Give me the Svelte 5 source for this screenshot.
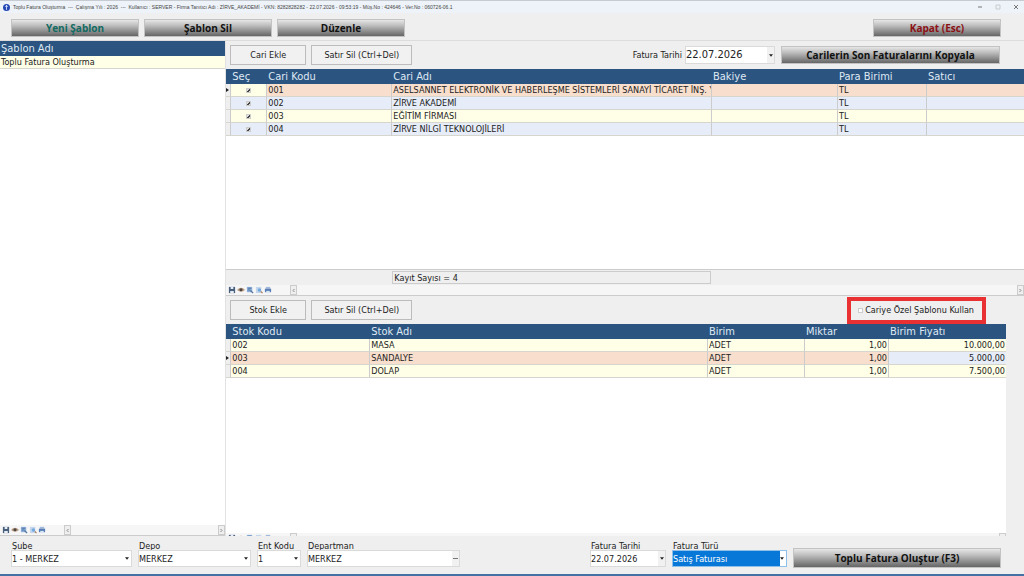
<script lang="ts">
  let customers = $state([
    { selected: true, code: "001", name: "ASELSANNET ELEKTRONİK VE HABERLEŞME SİSTEMLERİ SANAYİ TİCARET İNŞ. Y", currency: "TL" },
    { selected: true, code: "002", name: "ZİRVE AKADEMİ", currency: "TL" },
    { selected: true, code: "003", name: "EĞİTİM FİRMASI", currency: "TL" },
    { selected: true, code: "004", name: "ZİRVE NİLGİ TEKNOLOJİLERİ", currency: "TL" },
  ]);

  const stocks = [
    { code: "002", name: "MASA", unit: "ADET", amount: "1,00", price: "10.000,00" },
    { code: "003", name: "SANDALYE", unit: "ADET", amount: "1,00", price: "5.000,00" },
    { code: "004", name: "DOLAP", unit: "ADET", amount: "1,00", price: "7.500,00" },
  ];

  let currentCustomer = $state(0);
  let currentStock = $state(1);
  let invoiceDate = $state("22.07.2026");
  let useOwnTemplate = $state(false);
</script>

{#snippet caret()}
  <svg class="caret" viewBox="0 0 5 3" aria-hidden="true"><path d="M0 0h5L2.5 3z" /></svg>
{/snippet}

{#snippet pointer()}
  <svg class="pointer" viewBox="0 0 3 4" aria-hidden="true"><path d="M0 0v4l3-2z" /></svg>
{/snippet}

{#snippet navigator()}
  <div class="navigator">
    <button aria-label="Kaydet">
      <svg viewBox="0 0 9 9"><path d="M1 1h7v7H1z" fill="#48607c" /><path d="M3 1h3v2.500H3zM2.500 5.500h4V8h-4z" fill="#e6edf5" /></svg>
    </button>
    <button aria-label="Göster">
      <svg viewBox="0 0 9 9"><path d="M0 4.500q4.500-5 9 0q-4.500 4-9 0z" fill="#b79c86" /><circle cx="4.500" cy="4.300" r="1.700" fill="#4f4642" /></svg>
    </button>
    <button aria-label="Süz">
      <svg viewBox="0 0 9 9"><path d="M1 1h6v6H1z" fill="#8fb1db" /><path d="M2 2.500h4M2 4.500h3" stroke="#496f9f" /><path d="M5 5l3 3" stroke="#54779f" stroke-width="1.500" /></svg>
    </button>
    <button aria-label="Önizle">
      <svg viewBox="0 0 9 9"><path d="M1 1h6v7H1z" fill="#c4d6eb" /><circle cx="5" cy="4.500" r="2" fill="#76a9de" /><path d="M6.500 6l2 2" stroke="#a37855" stroke-width="1.300" /></svg>
    </button>
    <button aria-label="Yazdır">
      <svg viewBox="0 0 9 9"><path d="M2 1h5v2H2z" fill="#9fb9dc" /><path d="M1 3h7v4H1z" fill="#587eb4" /><path d="M2.500 5.500h4V8h-4z" fill="#dbe7f5" /></svg>
    </button>
    <div class="scrollbar">
      <button aria-label="Sola kaydır"><svg viewBox="0 0 5 5"><path d="M3.500 1L2 2.500 3.500 4" /></svg></button>
      <button aria-label="Sağa kaydır"><svg viewBox="0 0 5 5"><path d="M1.500 1L3 2.500 1.500 4" /></svg></button>
    </div>
  </div>
{/snippet}

<div class="window">
  <header class="titlebar">
    <svg class="logo" viewBox="0 0 8 8" aria-hidden="true">
      <circle cx="4" cy="4" r="4" fill="#2449b4" />
      <path d="M4 1.200v5.500M2.500 3.200L4 1.500l1.500 1.700" stroke="#dce6ff" fill="none" />
    </svg>
    <h1>Toplu Fatura Oluşturma &nbsp;---&nbsp; Çalışma Yılı : 2026 &nbsp;---&nbsp; Kullanıcı : SERVER - Firma Tanıtıcı Adı : ZİRVE_AKADEMİ - VKN: 8282828282 - 22.07.2026 - 09:53:19 - Müş.No : 424646 - Ver.No : 060726-06.1</h1>
    <div class="system">
      <button aria-label="Küçült"><svg viewBox="0 0 6 6"><path d="M1 3h4" /></svg></button>
      <button class="disabled" aria-label="Büyüt" disabled><svg viewBox="0 0 6 6"><path d="M1 1h4v4H1z" /></svg></button>
      <button aria-label="Pencereyi kapat"><svg viewBox="0 0 6 6"><path d="M1 1l4 4M5 1L1 5" /></svg></button>
    </div>
  </header>

  <nav class="toolbar">
    <button class="metal new">Yeni Şablon</button>
    <button class="metal">Şablon Sil</button>
    <button class="metal">Düzenle</button>
    <button class="metal close">Kapat (Esc)</button>
  </nav>

  <main>
    <aside>
      <table>
        <thead><tr><th>Şablon Adı</th></tr></thead>
        <tbody><tr><td>Toplu Fatura Oluşturma</td></tr></tbody>
      </table>
      <div class="space"></div>
      {@render navigator()}
    </aside>

    <div class="content">
      <section class="customers">
        <div class="actions">
          <button class="plain add">Cari Ekle</button>
          <button class="plain">Satır Sil (Ctrl+Del)</button>
          <label class="date-label" for="list-date">Fatura Tarihi</label>
          <div class="combo list-date">
            <input id="list-date" bind:value={invoiceDate} />
            <button aria-label="Takvim">{@render caret()}</button>
          </div>
          <button class="metal copy">Carilerin Son Faturalarını Kopyala</button>
        </div>
        <table>
          <colgroup>
            <col class="mark" /><col class="check" /><col class="code" /><col />
            <col class="balance" /><col class="currency" /><col class="seller" />
          </colgroup>
          <thead>
            <tr><th></th><th>Seç</th><th>Cari Kodu</th><th>Cari Adı</th><th>Bakiye</th><th>Para Birimi</th><th>Satıcı</th></tr>
          </thead>
          <tbody>
            {#each customers as customer, i}
              <tr class:current={i === currentCustomer} onclick={() => (currentCustomer = i)}>
                <td class="marker">{#if i === currentCustomer}{@render pointer()}{/if}</td>
                <td class="tick"><input type="checkbox" aria-label="Seç {customer.code}" bind:checked={customer.selected} /></td>
                <td>{customer.code}</td>
                <td>{customer.name}</td>
                <td></td>
                <td>{customer.currency}</td>
                <td></td>
              </tr>
            {/each}
          </tbody>
        </table>
        <div class="space"></div>
        <div class="summary"><output>Kayıt Sayısı = {customers.length}</output></div>
        {@render navigator()}
      </section>

      <section class="stocks">
        <div class="actions">
          <button class="plain add">Stok Ekle</button>
          <button class="plain">Satır Sil (Ctrl+Del)</button>
          <label class="own-template">
            <input type="checkbox" bind:checked={useOwnTemplate} />
            Cariye Özel Şablonu Kullan
          </label>
        </div>
        <div class="sheet">
          <table>
            <colgroup>
              <col class="mark" /><col class="stock-code" /><col />
              <col class="unit" /><col class="amount" /><col class="price" />
            </colgroup>
            <thead>
              <tr><th></th><th>Stok Kodu</th><th>Stok Adı</th><th>Birim</th><th>Miktar</th><th>Birim Fiyatı</th></tr>
            </thead>
            <tbody>
              {#each stocks as stock, i}
                <tr class:current={i === currentStock} onclick={() => (currentStock = i)}>
                  <td class="marker">{#if i === currentStock}{@render pointer()}{/if}</td>
                  <td>{stock.code}</td>
                  <td>{stock.name}</td>
                  <td>{stock.unit}</td>
                  <td class="number">{stock.amount}</td>
                  <td class="number focus">{stock.price}</td>
                </tr>
              {/each}
            </tbody>
          </table>
        </div>
        <div class="cut">{@render navigator()}</div>
      </section>
    </div>
  </main>

  <footer>
    <div class="field branch">
      <label for="branch">Şube</label>
      <div class="combo"><select id="branch"><option>1 - MERKEZ</option></select>{@render caret()}</div>
    </div>
    <div class="field depot">
      <label for="depot">Depo</label>
      <div class="combo"><select id="depot"><option>MERKEZ</option></select>{@render caret()}</div>
    </div>
    <div class="field ent">
      <label for="ent">Ent Kodu</label>
      <div class="combo"><select id="ent"><option>1</option></select>{@render caret()}</div>
    </div>
    <div class="field department">
      <label for="department">Departman</label>
      <div class="combo">
        <input id="department" value="MERKEZ" />
        <button aria-label="Departman seç"><svg class="dots" viewBox="0 0 5 1"><path d="M0 0h5v1H0z" /></svg></button>
      </div>
    </div>
    <div class="field date">
      <label for="date">Fatura Tarihi</label>
      <div class="combo">
        <input id="date" bind:value={invoiceDate} />
        <button aria-label="Takvim">{@render caret()}</button>
      </div>
    </div>
    <div class="field kind">
      <label for="kind">Fatura Türü</label>
      <div class="combo active"><select id="kind"><option>Satış Faturası</option></select>{@render caret()}</div>
    </div>
    <button class="metal create">Toplu Fatura Oluştur (F3)</button>
  </footer>
</div>

<style>
  :global(body) {
    margin: 0;
    background: #efefef;
  }

  .window {
    display: flex;
    flex-direction: column;
    box-sizing: border-box;
    min-height: 100vh;
    border-top: 1px solid #c5cbd0;
    border-bottom: 2px solid #4472a5;
    background: #efefef;
    color: #222;
    font-family: "DejaVu Sans Condensed", "DejaVu Sans", sans-serif;
    font-size: 9px;
    line-height: 12px;
  }

  .window * {
    box-sizing: border-box;
  }

  button,
  input,
  select {
    margin: 0;
    padding: 0;
    border: 0;
    border-radius: 0;
    color: inherit;
    font: inherit;
  }

  button {
    background: none;
  }

  .titlebar {
    display: flex;
    align-items: center;
    height: 12px;
    padding: 0 5px 0 3px;
    background: #eef3f9;
  }

  .logo {
    width: 7px;
    height: 7px;
  }

  h1 {
    flex: 1;
    margin: 0 0 0 3px;
    color: #444;
    font-family: "Liberation Sans", sans-serif;
    font-size: 5px;
    font-weight: 400;
    line-height: 8px;
    white-space: nowrap;
  }

  .system {
    display: flex;
    gap: 12px;
  }

  .system button {
    display: flex;
  }

  .system svg {
    width: 6px;
    height: 6px;
    fill: none;
    stroke: #777;
  }

  .system .disabled {
    opacity: 0.3;
  }

  .toolbar {
    display: flex;
    gap: 5px;
    height: 28px;
    padding: 6px 23px 0 11px;
    border-bottom: 1px solid #dcdcdc;
  }

  .metal {
    width: 128px;
    height: 18px;
    border: 1px solid #c3c3c3;
    background: linear-gradient(#e6e6e6, #bdbdbd 35%, #666);
    color: #111;
    font-family: "Open Sans", sans-serif;
    font-size: 10px;
    font-weight: 700;
    line-height: 16px;
  }

  .metal.new {
    color: #126a62;
  }

  .metal.close {
    margin-left: auto;
    color: #8b1014;
  }

  main {
    display: flex;
    flex: 1;
  }

  aside {
    display: flex;
    flex-direction: column;
    width: 22%;
    background: #fff;
  }

  .content {
    display: flex;
    flex: 1;
    flex-direction: column;
    min-width: 0;
    border-left: 1px solid #e2e2e2;
  }

  section {
    display: flex;
    flex-direction: column;
  }

  .customers {
    flex: 255;
  }

  .stocks {
    flex: 240;
  }

  .space {
    flex: 1;
    background: #fff;
  }

  .actions {
    display: flex;
    align-items: center;
    height: 28px;
    padding: 0 24px 0 4px;
  }

  .plain {
    width: 101px;
    height: 20px;
    border: 1px solid #bcbcbc;
    background: #f1f1f1;
  }

  .plain.add {
    width: 76px;
    margin-right: 5px;
  }

  .date-label {
    margin: 0 3px 0 auto;
  }

  .metal.copy {
    width: 219px;
    margin-left: 6px;
  }

  .combo {
    display: flex;
    position: relative;
    height: 17px;
    border: 1px solid #dadada;
    background: #fff;
  }

  .combo input,
  .combo select {
    flex: 1;
    min-width: 0;
    appearance: none;
    background: #fff;
    outline: 0;
  }

  .combo select {
    padding-right: 8px;
  }

  .combo button {
    display: flex;
    align-items: center;
    justify-content: center;
    width: 7px;
    background: #f1f1f1;
  }

  .caret {
    width: 4px;
    height: 3px;
    fill: #222;
  }

  select + .caret {
    position: absolute;
    top: 6px;
    right: 2px;
    pointer-events: none;
  }

  .dots {
    width: 5px;
    height: 1px;
    fill: #777;
  }

  .list-date {
    width: 90px;
    height: 18px;
    font-size: 11px;
  }

  table {
    width: 100%;
    border-collapse: separate;
    border-spacing: 0;
    table-layout: fixed;
  }

  th {
    height: 15px;
    padding: 0 1px;
    background: #2c5480;
    color: #dfe9f4;
    font-size: 11px;
    font-weight: 400;
    line-height: 15px;
    text-align: left;
    white-space: nowrap;
  }

  td {
    height: 13px;
    padding: 0 1px;
    overflow: hidden;
    border-right: 1px solid #ccc;
    border-bottom: 1px solid #d6d6ce;
    background: #ffffe8;
    white-space: nowrap;
  }

  .customers tr:nth-child(even) td {
    background: #e6edf8;
  }

  tr.current td {
    background: #f8dfcd;
  }

  tr.current .tick {
    background: #ffffe8;
  }

  tr.current .focus {
    background: #e6edf8;
  }

  .customers td.marker,
  .customers tr:nth-child(even) td.marker,
  .stocks td.marker {
    padding: 0;
    background: #efefef;
    line-height: 0;
  }

  .pointer {
    width: 3px;
    height: 4px;
    fill: #222;
  }

  td:last-child {
    border-right: 0;
  }

  .number {
    text-align: right;
  }

  .tick {
    line-height: 0;
    text-align: center;
  }

  .tick input {
    width: 5px;
    height: 5px;
    appearance: none;
    border: 1px solid #ddd;
    background: #eee;
    vertical-align: middle;
  }

  .tick input:checked {
    border-color: #ccc;
    background: linear-gradient(135deg, #ddd 45%, #444 45%, #444 75%, #ddd 75%);
  }

  .mark {
    width: 5px;
  }

  .check {
    width: 36px;
  }

  .code {
    width: 125px;
  }

  .balance {
    width: 126px;
  }

  .currency {
    width: 89px;
  }

  .seller {
    width: 97px;
  }

  .stock-code {
    width: 139px;
  }

  .unit {
    width: 97px;
  }

  .amount {
    width: 84px;
  }

  .price {
    width: 117px;
  }

  .summary {
    display: flex;
    height: 16px;
    padding: 1px 313px 1px 166px;
    border-top: 1px solid #ccc;
  }

  .summary output {
    flex: 1;
    padding: 0 1px;
    border: 1px solid #ccc;
    line-height: 13px;
  }

  .navigator {
    display: flex;
    align-items: center;
    height: 11px;
    padding-left: 1px;
    border-bottom: 1px solid #ccc;
    background: #f6f6f6;
  }

  .navigator button {
    display: flex;
    align-items: center;
    justify-content: center;
    width: 9px;
    height: 9px;
  }

  .navigator svg {
    width: 8px;
    height: 8px;
  }

  .scrollbar {
    display: flex;
    flex: 1;
    justify-content: space-between;
    margin-left: 18px;
  }

  .navigator .scrollbar button {
    width: 7px;
    height: 10px;
    border: 1px solid #ccc;
    background: #efefef;
  }

  .navigator .scrollbar svg {
    width: 5px;
    height: 5px;
    fill: none;
    stroke: #888;
  }

  .own-template {
    display: flex;
    align-items: center;
    gap: 2px;
    height: 27px;
    margin: 0 14px 0 auto;
    padding: 0 8px 0 7px;
    border: 4px solid #e93134;
  }

  .own-template input {
    width: 5px;
    height: 5px;
    appearance: none;
    border: 1px solid #ccc;
    background: #fff;
  }

  .own-template input:checked {
    background: #333;
  }

  .sheet {
    flex: 1;
    margin-right: 18px;
    background: #fff;
  }

  .cut {
    height: 3px;
    margin-right: 18px;
    overflow: hidden;
  }

  footer {
    display: flex;
    align-items: flex-start;
    gap: 6px;
    height: 38px;
    padding: 4px 23px 0 11px;
  }

  .field label {
    display: block;
    height: 10px;
    padding-left: 1px;
    white-space: nowrap;
  }

  .branch {
    width: 121px;
  }

  .depot {
    width: 113px;
  }

  .ent {
    width: 44px;
  }

  .department {
    width: 153px;
  }

  .date {
    width: 76px;
    margin-left: auto;
  }

  .kind {
    width: 115px;
  }

  .combo.active {
    border-color: #8fc0ea;
  }

  .active select {
    flex: 0 1 107px;
    padding: 0;
    background: #0878d8;
    color: #fff;
  }

  .metal.create {
    width: 208px;
    height: 20px;
    margin-top: 8px;
  }
</style>
